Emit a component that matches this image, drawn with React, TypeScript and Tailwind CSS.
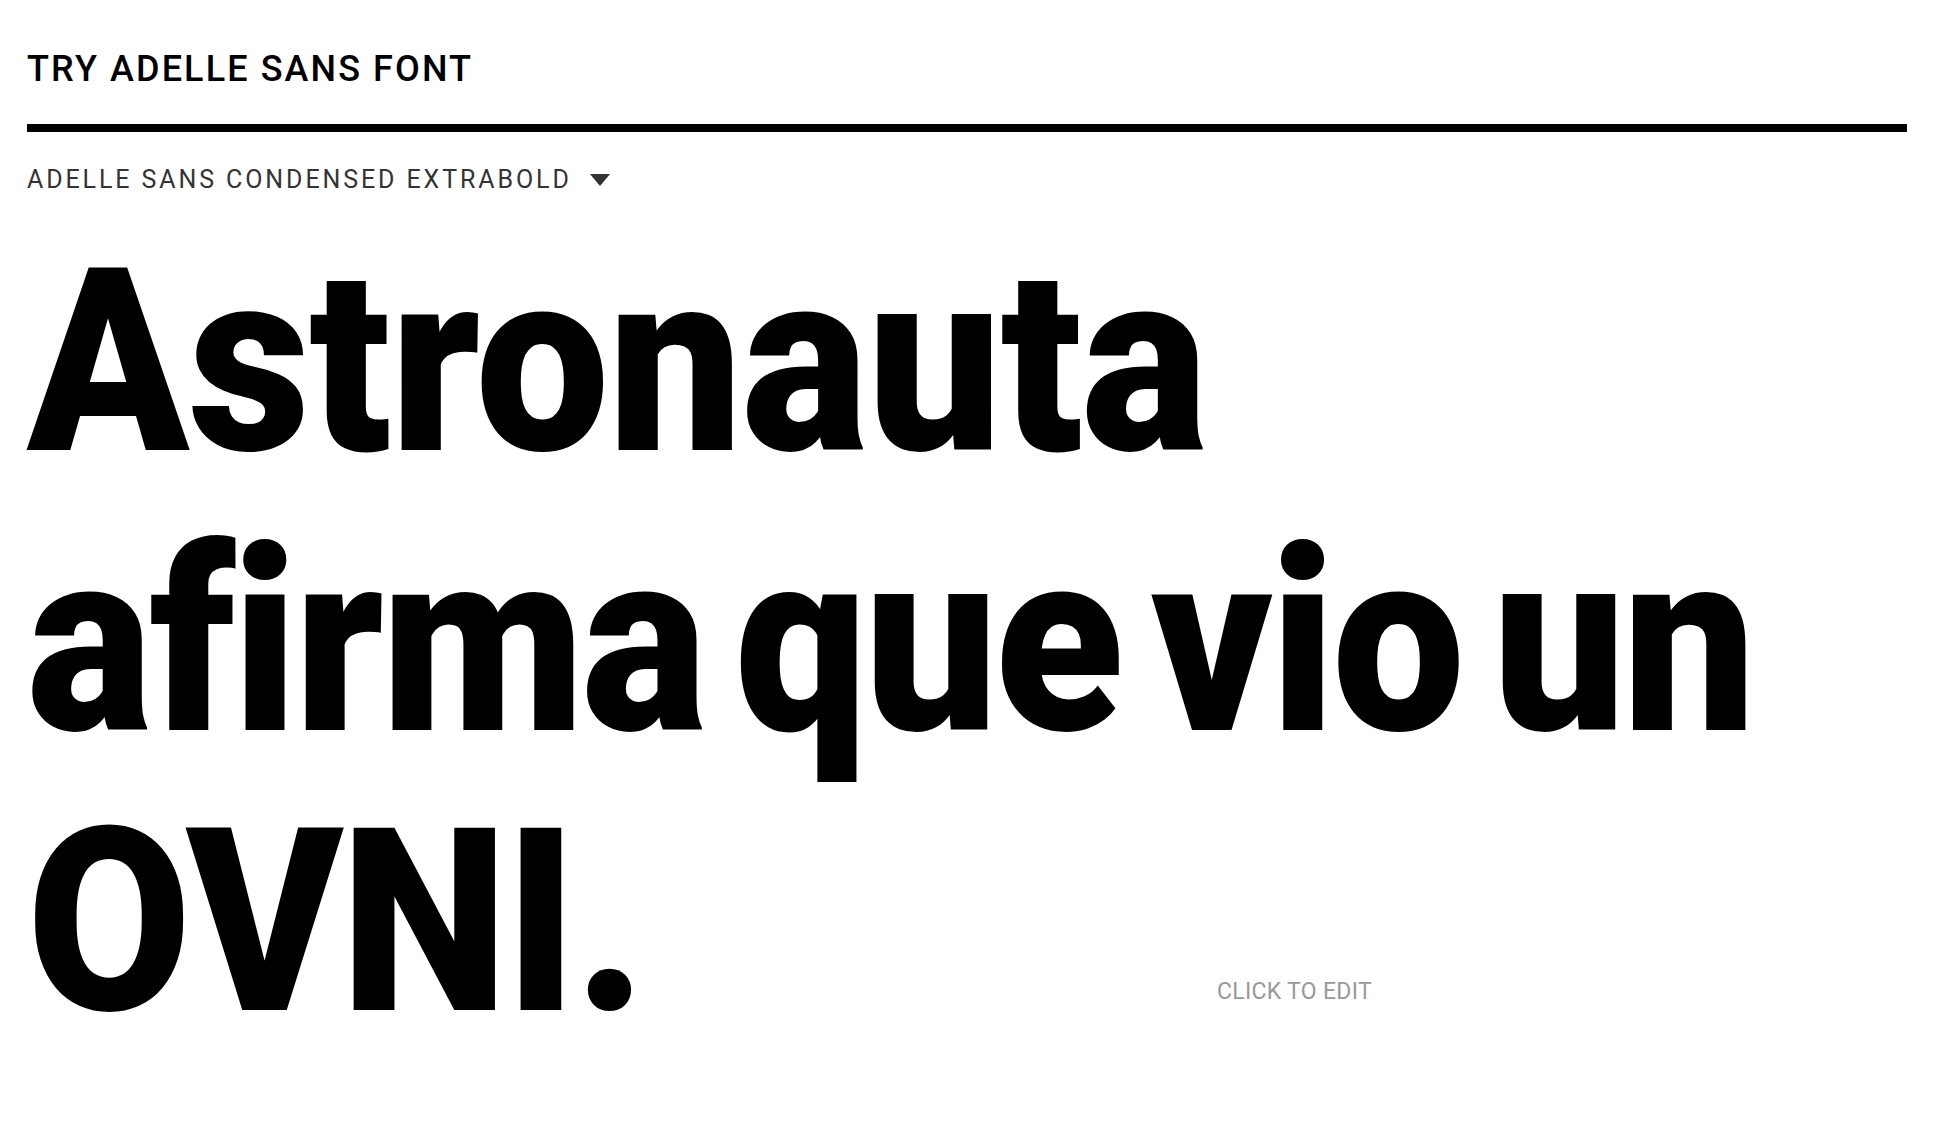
import React from 'react';

const lines = [
  { text: 'Astronauta', cls: 'tracking-[-1px] scale-x-[0.93]' },
  { text: 'afirma que vio un', cls: 'tracking-[-3px] scale-x-[0.922]' },
  { text: 'OVNI.', cls: 'tracking-[-3px] scale-x-[0.93]' },
];

export default function App() {
  return (
    <div className="min-h-screen bg-white pl-[27px] pr-[47px] pt-[48px] font-['Roboto',sans-serif]">
      {/* Header */}
      <h1 className="text-[36px] leading-[43px] font-medium tracking-[2.1px] text-black">TRY ADELLE SANS FONT</h1>
      <div className="mt-[33px] h-[8px] w-full bg-black" />

      {/* Font picker */}
      <button className="mt-[33px] flex items-center gap-[18px] text-[25px] leading-[30px] tracking-[2.9px] text-[#333]">
        <span>ADELLE SANS CONDENSED EXTRABOLD</span>
        <svg width="20" height="13" viewBox="0 0 20 13" className="mt-[1px]">
          <path d="M0 0 H20 L10 12 Z" fill="#333" />
        </svg>
      </button>

      {/* Editable sample */}
      <div className="relative mt-[28px]">
        <div className="text-[256px] leading-[280px] font-black [word-spacing:-28px] text-black">
          {lines.map((l) => (
            <div key={l.text} className={`whitespace-nowrap origin-left ${l.cls}`}>{l.text}</div>
          ))}
        </div>
        <span className="absolute left-[1190px] top-[755px] text-[23px] leading-[28px] text-[#999] tracking-[0.3px]">
          CLICK TO EDIT
        </span>
      </div>
    </div>
  );
}
